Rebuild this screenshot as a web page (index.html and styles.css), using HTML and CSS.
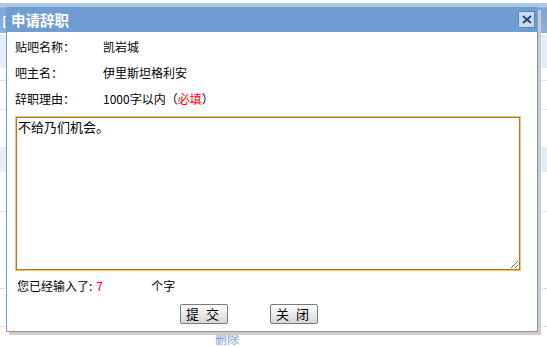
FILE: index.html
```html
<!DOCTYPE html>
<html lang="zh-CN">
<head>
  <meta charset="UTF-8">
  <meta name="viewport" content="width=device-width, initial-scale=1.0">
  <title>申请辞职</title>
  <link rel="stylesheet" href="styles.css">
</head>
<body>

<div class="page">
  <div class="top-bar"><span class="top-title">[</span></div>
  <div class="bg-row tinted"></div>
  <div class="bg-row row-a"></div>
  <div class="bg-row row-b"></div>
  <div class="bg-row row-c"></div>
  <div class="bg-row tinted short"></div>
  <div class="bg-row row-d"></div>
  <div class="bg-row row-e"></div>
  <div class="bg-row dotted"></div>
  <div class="bg-row dotted last"></div>
  <div class="bg-links"><a href="#" class="del">删除</a></div>
</div>

<div class="dialog">
  <div class="dlg-title">
    <span>申请辞职</span>
    <button class="dlg-close" type="button">
      <svg width="10" height="9" viewBox="0 0 10 9">
        <path d="M1 1 L9 8 M9 1 L1 8" stroke="#234a86" stroke-width="2" fill="none"/>
      </svg>
    </button>
  </div>

  <div class="dlg-body">
    <div class="field"><span class="field-label">贴吧名称：</span><span>凯岩城</span></div>
    <div class="field"><span class="field-label">吧主名：</span><span>伊里斯坦格利安</span></div>
    <div class="field"><span class="field-label">辞职理由：</span><span>1000字以内（<span class="req">必填</span>）</span></div>

    <textarea class="reason">不给乃们机会。</textarea>

    <div class="counter">您已经输入了:<span class="count">7</span>个字</div>

    <div class="actions">
      <button type="button" class="btn">提交</button>
      <button type="button" class="btn">关闭</button>
    </div>
  </div>
</div>

</body>
</html>
```

FILE: styles.css
```css
body {
  margin: 0;
  font-family: "Noto Sans CJK SC", "DejaVu Sans", sans-serif;
  font-size: 12px;
  color: #000;
  background-color: #fff;
}

/* page behind the dialog */
.page {
  padding-top: 3px;
}

.top-bar {
  height: 30px;
  background: linear-gradient(#a9c8ea 0, #a9c8ea 4px, #7ba5d7 5px, #8cb2df 100%);
}

.top-title {
  display: inline-block;
  padding: 8px 0 0 2px;
  color: #fff;
  font-weight: bold;
  font-size: 13px;
}

.bg-row {
  border-bottom: 1px solid #e2e2e2;
}

.bg-row.tinted {
  margin-top: 2px;
  height: 33px;
  background-color: #e4eef8;
  border-bottom: none;
}

.row-a { height: 12px; }
.row-b { height: 28px; }
.row-c { height: 37px; border-bottom: none; }

.bg-row.tinted.short {
  margin-top: 0;
  height: 25px;
}

.row-d { height: 39px; }
.row-e { height: 76px; border-bottom: none; }

.bg-row.dotted {
  height: 0;
  border-bottom: 1px dotted #c8c8c8;
}

.bg-row.dotted.last {
  margin-top: 37px;
}

.bg-links {
  padding: 6px 0 0 215px;
  line-height: 12px;
}

.del {
  color: #6f97d9;
  text-decoration: none;
}

/* dialog */
.dialog {
  position: absolute;
  left: 6px;
  top: 7px;
  width: 530px;
  height: 324px;
  border: 1px solid #6e9cd3;
  border-top: none;
  background-color: #fff;
  box-shadow: 3px 3px 0 #cccccc;
}

.dlg-title {
  height: 25px;
  background-color: #6f9cd1;
  display: flex;
  align-items: center;
  justify-content: space-between;
  padding: 0 3px 0 5px;
  margin: 0 -1px;
  color: #fff;
  font-size: 14.5px;
  font-weight: bold;
}

.dlg-close {
  width: 17px;
  height: 17px;
  padding: 0;
  border: 1px solid #5a86bf;
  background-color: #c9dbf0;
  display: flex;
  align-items: center;
  justify-content: center;
  cursor: pointer;
}

.dlg-body {
  padding: 2px 0 0 8px;
}

.field {
  display: flex;
  height: 26px;
  line-height: 26px;
}

.field-label {
  width: 88px;
}

.req {
  color: #f00;
}

.reason {
  display: block;
  margin: 5px 0 0 1px;
  width: 504px;
  height: 153px;
  box-sizing: border-box;
  padding: 1px;
  border: 1px solid #a57c2c;
  box-shadow: 0 0 0 1px #f0c46c;
  font-family: "Noto Sans CJK SC", "DejaVu Sans", sans-serif;
  font-size: 13px;
  line-height: 16px;
  resize: both;
  outline: none;
}

.counter {
  margin-top: 6px;
  line-height: 20px;
  padding-left: 2px;
}

.count {
  display: inline-block;
  width: 55px;
  padding-left: 4px;
  color: #f00;
}

.actions {
  display: flex;
  gap: 42px;
  padding: 8px 0 0 165px;
}

.btn {
  width: 48px;
  height: 20px;
  padding: 0 0 0 5px;
  text-align: left;
  white-space: nowrap;
  overflow: hidden;
  letter-spacing: 7px;
  border: 1px solid #7a7a7a;
  border-radius: 2px;
  background: linear-gradient(#ffffff, #e6e6e6 60%, #d4d4d4);
  font-family: "Noto Sans CJK SC", "DejaVu Sans", sans-serif;
  font-size: 13px;
  line-height: 18px;
  color: #000;
  cursor: pointer;
}
```
